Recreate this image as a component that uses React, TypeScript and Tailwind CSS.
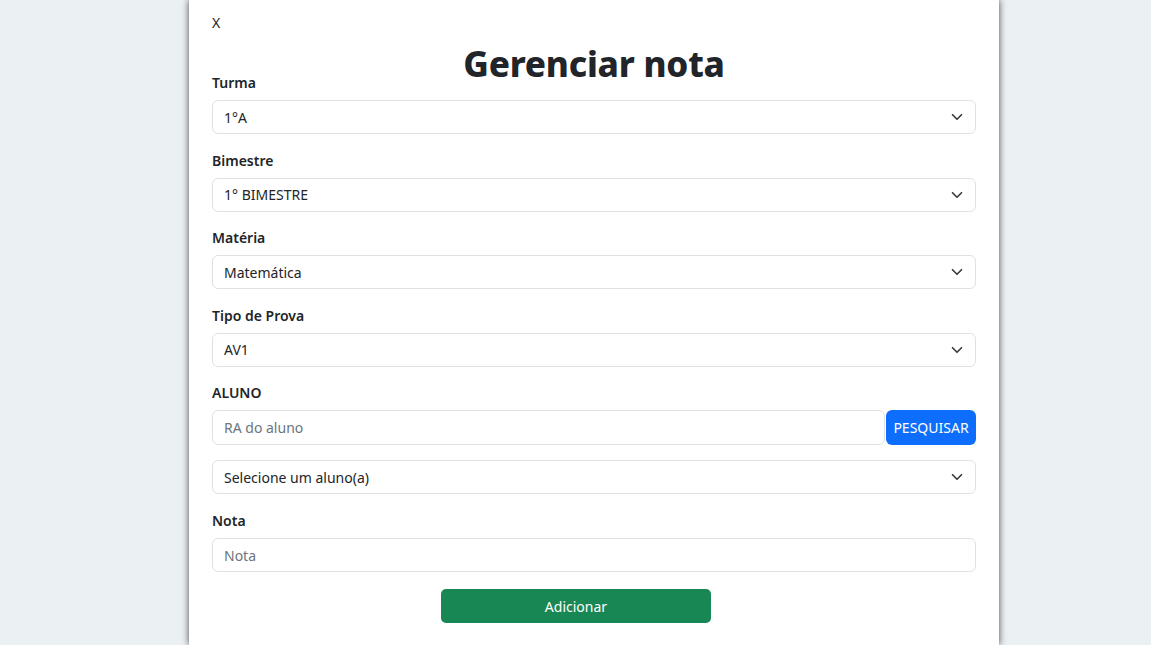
import React from "react";

const Chevron = () => (
  <svg
    className="pointer-events-none absolute right-[12px] top-1/2 -translate-y-1/2"
    width="12"
    height="12"
    viewBox="0 0 16 16"
    fill="none"
    stroke="#343a40"
    strokeWidth="2.2"
    strokeLinecap="round"
    strokeLinejoin="round"
  >
    <path d="m2 5 6 6 6-6" />
  </svg>
);

const SelectBox = ({ value }: { value: string }) => (
  <div className="relative h-[34px] w-full rounded-[6px] border border-[#dee2e6] bg-white flex items-center pl-[11px] text-[14px] text-[#212529]">
    <span>{value}</span>
    <Chevron />
  </div>
);

const Label = ({ children }: { children: React.ReactNode }) => (
  <div className="mb-[7px] text-[14px] font-semibold leading-[21px] text-[#212529]">{children}</div>
);

export default function App() {
  return (
    <div
      className="min-h-[645px] w-full bg-[#ebf0f3] flex justify-center"
      style={{ fontFamily: '"Noto Sans", "Open Sans", sans-serif' }}
    >
      <div className="ml-[37px] w-[810px] h-[645px] bg-white shadow-[0_0_7px_rgba(0,0,0,0.7)] px-[23px] pt-[12px]">
        <div className="text-[14px] leading-[21px] text-[#212529]">X</div>
        <h1 className="text-center text-[35px] leading-[44px] font-extrabold text-[#212529] mt-[9px] mb-[-14px] tracking-[-0.2px]">
          Gerenciar nota
        </h1>
        <div className="flex flex-col">
          <div className="mb-[15.5px]">
            <Label>Turma</Label>
            <SelectBox value="1°A" />
          </div>
          <div className="mb-[15.5px]">
            <Label>Bimestre</Label>
            <SelectBox value="1° BIMESTRE" />
          </div>
          <div className="mb-[15.5px]">
            <Label>Matéria</Label>
            <SelectBox value="Matemática" />
          </div>
          <div className="mb-[15.5px]">
            <Label>Tipo de Prova</Label>
            <SelectBox value="AV1" />
          </div>
          <div className="mb-[16px]">
            <Label>ALUNO</Label>
            <div className="flex mb-[15px]">
              <div className="flex-1 h-[35px] rounded-[6px] border border-[#dee2e6] flex items-center pl-[11px] text-[14px] text-[#6c757d]">
                RA do aluno
              </div>
              <button className="ml-px w-[90px] h-[35px] rounded-[6px] bg-[#0d6efd] text-white text-[14px]">
                PESQUISAR
              </button>
            </div>
            <SelectBox value="Selecione um aluno(a)" />
          </div>
          <div className="mb-[17px]">
            <Label>Nota</Label>
            <div className="h-[34px] rounded-[6px] border border-[#dee2e6] flex items-center pl-[11px] text-[14px] text-[#6c757d]">
              Nota
            </div>
          </div>
          <div className="pl-[229px]">
            <button className="w-[270px] h-[34px] rounded-[5px] bg-[#198754] text-white text-[14px]">
              Adicionar
            </button>
          </div>
        </div>
      </div>
    </div>
  );
}
